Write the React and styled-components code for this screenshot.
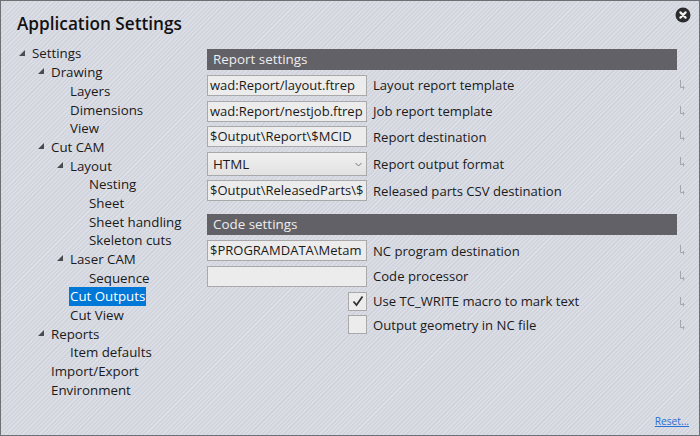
import React from 'react';
import styled, { createGlobalStyle } from 'styled-components';

const GlobalStyle = createGlobalStyle`
  html, body { margin: 0; padding: 0; }
  body { font-family: "Open Sans", "Noto Sans", "Liberation Sans", sans-serif; }
`;

const treeItems = [
  { label: 'Settings', level: 0, open: true },
  { label: 'Drawing', level: 1, open: true },
  { label: 'Layers', level: 2 },
  { label: 'Dimensions', level: 2 },
  { label: 'View', level: 2 },
  { label: 'Cut CAM', level: 1, open: true },
  { label: 'Layout', level: 2, open: true },
  { label: 'Nesting', level: 3 },
  { label: 'Sheet', level: 3 },
  { label: 'Sheet handling', level: 3 },
  { label: 'Skeleton cuts', level: 3 },
  { label: 'Laser CAM', level: 2, open: true },
  { label: 'Sequence', level: 3 },
  { label: 'Cut Outputs', level: 2, selected: true },
  { label: 'Cut View', level: 2 },
  { label: 'Reports', level: 1, open: true },
  { label: 'Item defaults', level: 2 },
  { label: 'Import/Export', level: 1 },
  { label: 'Environment', level: 1 },
];

const Hint = () => (
  <HintIcon width="6" height="10" viewBox="0 0 6 10">
    <path d="M1.5 0V7.5H5.5" fill="none" stroke="#a4a6ac" strokeWidth="1" />
    <path d="M4.5 6V9.5" fill="none" stroke="#9fadc2" strokeWidth="1" />
  </HintIcon>
);

const TextRow = ({ value, label }) => (
  <Row>
    <TextBox>{value}</TextBox>
    <RowLabel>{label}</RowLabel>
    <Hint />
  </Row>
);

const App = () => (
  <>
    <GlobalStyle />
    <Window>
      <CloseButton>
        <svg width="16" height="16" viewBox="0 0 16 16">
          <circle cx="8" cy="8" r="7.5" fill="#2b2b2d" />
          <path d="M5.4 5.4L10.6 10.6M10.6 5.4L5.4 10.6" stroke="#f2f2f2" strokeWidth="2.2" strokeLinecap="round" />
        </svg>
      </CloseButton>
      <Title>Application Settings</Title>
      <Body>
        <Tree>
          {treeItems.map((item) => (
            <TreeRow key={item.label} $level={item.level}>
              {item.open && (
                <Arrow $level={item.level} width="8" height="8" viewBox="0 0 8 8">
                  <path d="M7 1V7H1Z" fill="#4a4b4f" />
                </Arrow>
              )}
              <TreeLabel $selected={item.selected}>{item.label}</TreeLabel>
            </TreeRow>
          ))}
        </Tree>
        <Panel>
          <Section>
            <SectionHeader>Report settings</SectionHeader>
            <TextRow value="wad:Report/layout.ftrep" label="Layout report template" />
            <TextRow value="wad:Report/nestjob.ftrep" label="Job report template" />
            <TextRow value="$Output\Report\$MCID" label="Report destination" />
            <Row>
              <SelectBox>
                HTML
                <svg width="7" height="5" viewBox="0 0 7 5">
                  <path d="M0.5 1L3.5 4L6.5 1" fill="none" stroke="#77787c" strokeWidth="1" />
                </svg>
              </SelectBox>
              <RowLabel>Report output format</RowLabel>
              <Hint />
            </Row>
            <TextRow value="$Output\ReleasedParts\$" label="Released parts CSV destination" />
          </Section>
          <Section>
            <SectionHeader>Code settings</SectionHeader>
            <TextRow value="$PROGRAMDATA\Metam" label="NC program destination" />
            <TextRow value="" label="Code processor" />
            <CheckRow>
              <CheckBox>
                <svg width="12" height="12" viewBox="0 0 12 12">
                  <path d="M1.5 6.5L4.5 10L10.5 1.5" fill="none" stroke="#2e2e30" strokeWidth="1.7" />
                </svg>
              </CheckBox>
              <RowLabel>Use TC_WRITE macro to mark text</RowLabel>
              <Hint />
            </CheckRow>
            <CheckRow>
              <CheckBox />
              <RowLabel>Output geometry in NC file</RowLabel>
              <Hint />
            </CheckRow>
          </Section>
        </Panel>
      </Body>
      <ResetLink>Reset...</ResetLink>
    </Window>
  </>
);

export default App;

const Window = styled.div`
  position: relative;
  box-sizing: border-box;
  width: 700px;
  height: 436px;
  overflow: hidden;
  border: 1px solid #6f7074;
  color: #1a1a1a;
  background: repeating-linear-gradient(135deg, #dcdee6 0, #dcdee6 1.5px, #d2d4dd 1.5px, #d2d4dd 3px);
`;

const CloseButton = styled.div`
  position: absolute;
  top: 6px;
  right: 8px;
  width: 16px;
  height: 16px;
  line-height: 0;
`;

const Title = styled.h1`
  margin: 0;
  padding: 10px 0 0 16px;
  font-size: 17.2px;
  line-height: 26px;
  font-weight: 600;
  color: #111;
`;

const Body = styled.div`
  display: flex;
  margin-top: 7.6px;
`;

const Tree = styled.div`
  display: flex;
  flex-direction: column;
  width: 206px;
  flex-shrink: 0;
`;

const TreeRow = styled.div`
  position: relative;
  display: flex;
  align-items: center;
  height: 18.7px;
  padding-left: ${({ $level }) => 31 + $level * 19}px;
`;

const Arrow = styled.svg`
  position: absolute;
  left: ${({ $level }) => 17 + $level * 19}px;
  top: 4px;
`;

const TreeLabel = styled.span`
  display: inline-block;
  padding: 0 1px;
  margin-left: -1px;
  font-size: 13.3px;
  line-height: 19px;
  white-space: nowrap;
  color: ${({ $selected }) => ($selected ? '#fff' : '#1a1a1a')};
  background: ${({ $selected }) => ($selected ? '#0078d7' : 'transparent')};
`;

const Panel = styled.div`
  display: flex;
  flex-direction: column;
  gap: 13px;
  width: 470px;
  padding-top: 4.4px;
`;

const Section = styled.section`
  display: flex;
  flex-direction: column;
  gap: 4.6px;
`;

const SectionHeader = styled.div`
  box-sizing: border-box;
  height: 21px;
  margin-bottom: 0.4px;
  padding-left: 6px;
  font-size: 13.4px;
  line-height: 21px;
  color: #eeeef0;
  background: #616167;
`;

const Row = styled.div`
  position: relative;
  display: flex;
  align-items: center;
`;

const CheckRow = styled(Row)`
  padding-left: 141px;
`;

const TextBox = styled.div`
  box-sizing: border-box;
  width: 160px;
  height: 21px;
  padding: 0 2px;
  overflow: hidden;
  flex-shrink: 0;
  font-size: 13px;
  line-height: 19px;
  white-space: nowrap;
  color: #1a1a1a;
  background: #ececec;
  border: 1px solid #a9a9ab;
`;

const SelectBox = styled(TextBox)`
  display: flex;
  align-items: center;
  justify-content: space-between;
  padding: 1px 4px 0 5px;
  height: 24px;
  font-size: 13.4px;
  background: linear-gradient(#f0f0f0, #e2e2e2);
`;

const CheckBox = styled.div`
  box-sizing: border-box;
  display: flex;
  align-items: center;
  justify-content: center;
  width: 19px;
  height: 19px;
  flex-shrink: 0;
  background: #ececec;
  border: 1px solid #a9a9ab;
`;

const RowLabel = styled.span`
  margin-left: 6px;
  font-size: 13.1px;
  line-height: 18px;
  white-space: nowrap;
  color: #1a1a1a;
`;

const HintIcon = styled.svg`
  position: absolute;
  right: -8px;
  top: 5px;
`;

const ResetLink = styled.a`
  position: absolute;
  right: 10px;
  bottom: 7px;
  font-size: 10.2px;
  line-height: 13px;
  color: #2a6fd6;
  text-decoration: underline;
`;
